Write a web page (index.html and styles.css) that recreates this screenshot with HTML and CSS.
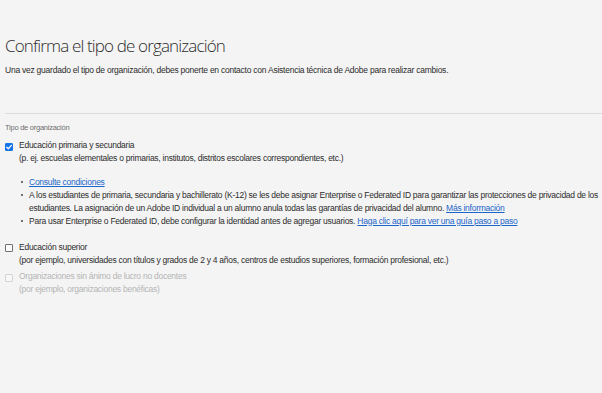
FILE: index.html
```html
<!DOCTYPE html>
<html lang="es">
<head>
<meta charset="utf-8">
<title>Confirma el tipo de organización</title>
<link rel="stylesheet" href="styles.css">
</head>
<body>
<main class="page">
  <h1 class="title">Confirma el tipo de organización</h1>
  <p class="intro">Una vez guardado el tipo de organización, debes ponerte en contacto con Asistencia técnica de Adobe para realizar cambios.</p>
  <hr class="divider">
  <div class="field-label">Tipo de organización</div>

  <div class="option">
    <span class="box box-checked">
      <svg viewBox="0 0 8 8" width="8" height="8"><path d="M1.7 4.1 L3.3 5.7 L6.4 2.4" fill="none" stroke="#fff" stroke-width="1.3" stroke-linecap="round" stroke-linejoin="round"/></svg>
    </span>
    <div class="option-body">
      <div class="option-title">Educación primaria y secundaria</div>
      <div class="option-desc">(p. ej. escuelas elementales o primarias, institutos, distritos escolares correspondientes, etc.)</div>
      <ul class="notes">
        <li><a href="#" class="link">Consulte condiciones</a></li>
        <li>A los estudiantes de primaria, secundaria y bachillerato (K-12) se les debe asignar Enterprise o Federated ID para garantizar las protecciones de privacidad de los estudiantes. La asignación de un Adobe ID individual a un alumno anula todas las garantías de privacidad del alumno. <a href="#" class="link">Más información</a></li>
        <li>Para usar Enterprise o Federated ID, debe configurar la identidad antes de agregar usuarios. <a href="#" class="link">Haga clic aquí para ver una guía paso a paso</a></li>
      </ul>
    </div>
  </div>

  <div class="option option-gap">
    <span class="box"></span>
    <div class="option-body">
      <div class="option-title">Educación superior</div>
      <div class="option-desc">(por ejemplo, universidades con títulos y grados de 2 y 4 años, centros de estudios superiores, formación profesional, etc.)</div>
    </div>
  </div>

  <div class="option option-disabled">
    <span class="box box-disabled"></span>
    <div class="option-body">
      <div class="option-title">Organizaciones sin ánimo de lucro no docentes</div>
      <div class="option-desc">(por ejemplo, organizaciones benéficas)</div>
    </div>
  </div>
</main>
</body>
</html>
```

FILE: styles.css
```css
html, body {
  margin: 0;
  padding: 0;
  background: #f4f4f4;
}
body {
  font-family: "Liberation Sans", Arial, sans-serif;
  color: #2c2c2c;
  width: 602px;
  height: 393px;
  overflow: hidden;
}
.page {
  padding: 36px 0 0 5px;
}
.title {
  margin: 0;
  font-family: "Open Sans", "Liberation Sans", sans-serif;
  font-weight: 300;
  font-size: 17px;
  line-height: 20px;
  letter-spacing: -0.85px;
  color: #2c2c2c;
}
.intro {
  margin: 7.5px 0 0;
  font-size: 8.5px;
  line-height: 13px;
  letter-spacing: -0.24px;
}
.divider {
  margin: 36px 0 0;
  border: 0;
  height: 1px;
  background: #dcdcdc;
}
.field-label {
  margin-top: 8.5px;
  font-size: 7.5px;
  line-height: 12px;
  color: #6e6e6e;
  letter-spacing: -0.25px;
}
.option {
  display: flex;
  gap: 6px;
  margin-top: 5px;
  font-size: 8.5px;
  line-height: 13px;
  letter-spacing: -0.26px;
}
.option-gap {
  margin-top: 13px;
}
.option-disabled {
  margin-top: 3.5px;
  color: #b4b4b4;
}
.box {
  flex: none;
  box-sizing: border-box;
  width: 8px;
  height: 8px;
  margin-top: 3.5px;
  border: 1px solid #707070;
  border-radius: 1px;
  background: #fafafa;
  display: flex;
}
.box svg {
  display: block;
  margin: -1px;
}
.box-checked {
  background: #1473e6;
  border-color: #1473e6;
}
.box-disabled {
  border-color: #d4d4d4;
  background: #f7f7f7;
}
.option-body {
  flex: 1;
  padding-right: 4px;
}
.notes {
  list-style: none;
  margin: 10.5px 0 0;
  padding: 0 0 0 10px;
}
.notes li {
  position: relative;
}
.notes li::before {
  content: "";
  position: absolute;
  left: -8px;
  top: 5.5px;
  width: 2px;
  height: 2px;
  border-radius: 50%;
  background: #444;
}
.link {
  color: #1b66c9;
  text-decoration: underline;
}
```
